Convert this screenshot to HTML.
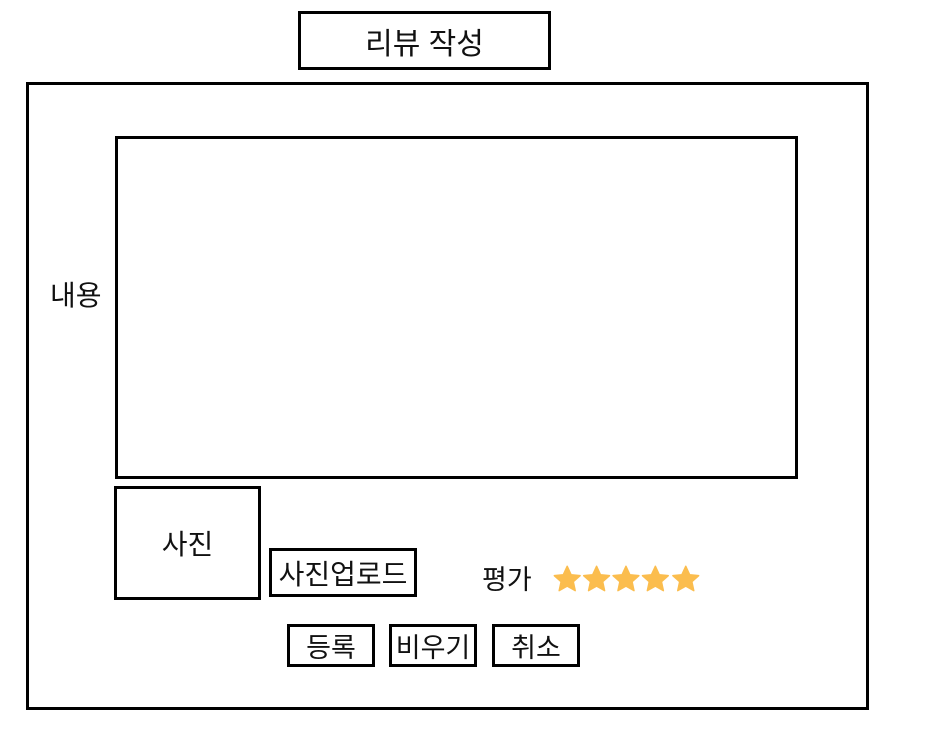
<!DOCTYPE html>
<html><head><meta charset="utf-8"><style>
body{margin:0;width:933px;height:734px;background:#fff;position:relative;font-family:"Liberation Sans","Noto Sans CJK KR",sans-serif;color:#111;overflow:hidden}
.b{position:absolute;border:3px solid #000;box-sizing:border-box;display:flex;align-items:center;justify-content:center}
.t{position:absolute;line-height:1}
</style></head><body>
<div class="b" style="left:298px;top:11px;width:253px;height:59px;font-size:30px">리뷰 작성</div>
<div class="b" style="left:26px;top:82px;width:843px;height:628px"></div>
<div class="t" style="left:50px;top:282px;font-size:28px">내용</div>
<div class="b" style="left:115px;top:136px;width:683px;height:343px"></div>
<div class="b" style="left:114px;top:486px;width:147px;height:114px;font-size:28px">사진</div>
<div class="b" style="left:269px;top:548px;width:148px;height:49px;font-size:28px">사진업로드</div>
<div class="t" style="left:482px;top:567px;font-size:27px">평가</div>
<svg style="position:absolute;left:552px;top:564px" width="152" height="32" viewBox="0 0 150 30">
<defs><path id="s" d="M14 1.5l3.8 8.3 8.9.9-6.7 6 1.9 8.8L14 21l-7.9 4.5 1.9-8.8-6.7-6 8.9-.9z" fill="#fbbd4e" stroke="#fbbd4e" stroke-linejoin="round" stroke-width="1.5"/></defs>
<use href="#s" x="1"/><use href="#s" x="30"/><use href="#s" x="59"/><use href="#s" x="88"/><use href="#s" x="118"/>
</svg>
<div class="b" style="left:287px;top:624px;width:88px;height:43px;font-size:27px">등록</div>
<div class="b" style="left:389px;top:624px;width:88px;height:43px;font-size:27px">비우기</div>
<div class="b" style="left:492px;top:624px;width:88px;height:43px;font-size:27px">취소</div>
</body></html>
